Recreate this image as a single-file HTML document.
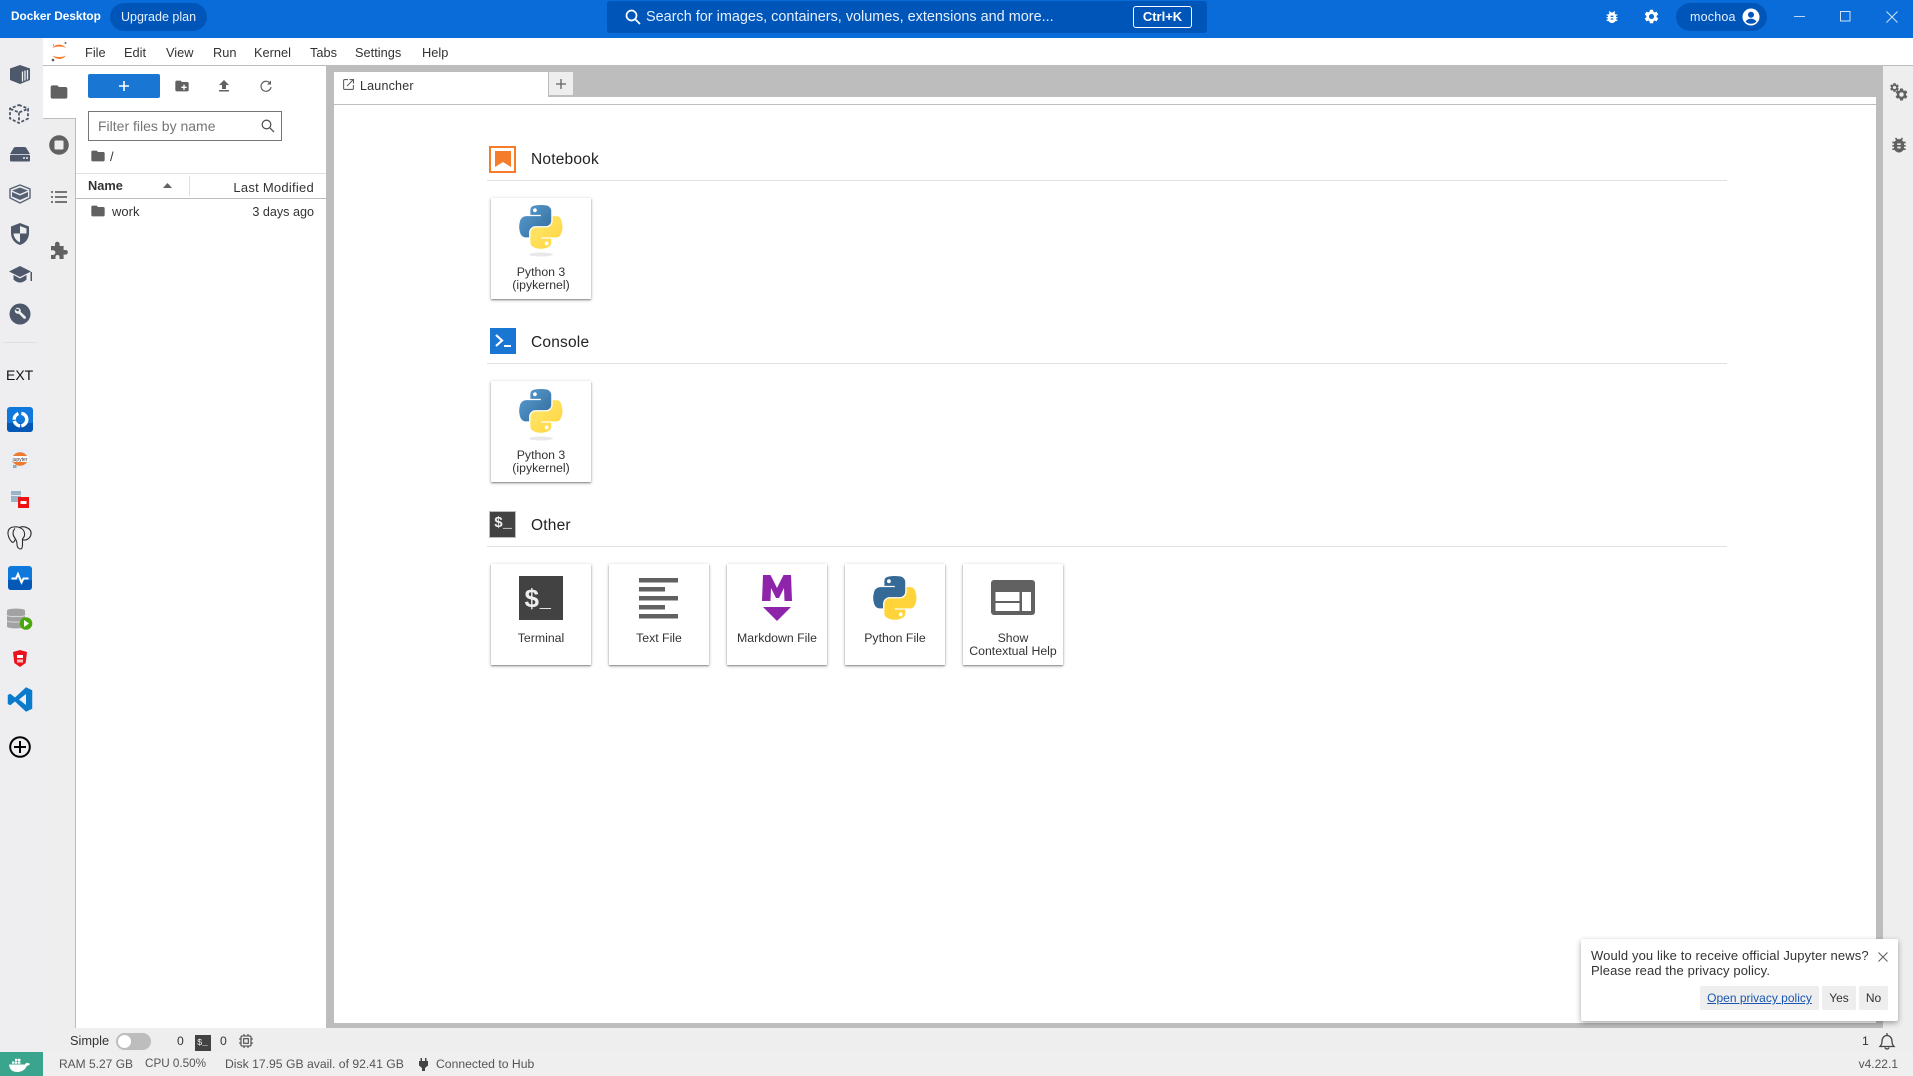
<!DOCTYPE html>
<html lang="en"><head><meta charset="utf-8"><title>Docker Desktop</title>
<style>
html,body{margin:0;padding:0;width:1913px;height:1076px;overflow:hidden;background:#eeeeee;font-family:"Liberation Sans",sans-serif;color:#333}
.a{position:absolute}
.t{position:absolute;white-space:nowrap;line-height:16px}
svg{position:absolute;overflow:visible}
.card{position:absolute;width:100px;height:101px;background:#fff;box-shadow:0 1px 3px rgba(0,0,0,.35),0 1px 1px rgba(0,0,0,.25)}
.lab{position:absolute;width:100px;text-align:center;font-size:12.3px;line-height:13px;color:#333}
.sec{position:absolute;font-size:15.5px;color:#222;line-height:18px;letter-spacing:.2px;white-space:nowrap}
.hr{position:absolute;left:487px;width:1240px;height:1px;background:#e0e0e0}
.m{position:absolute;top:45px;font-size:12.8px;line-height:16px;color:#333;white-space:nowrap}
.s{position:absolute;font-size:12.2px;line-height:14px;color:#555;white-space:nowrap}
</style></head>
<body>
<svg width="0" height="0" style="position:absolute"><defs>
<linearGradient id="pb" x1="0" y1="0" x2="1" y2="1"><stop offset="0" stop-color="#5a9fd4"/><stop offset="1" stop-color="#306998"/></linearGradient>
<linearGradient id="py" x1="0" y1="0" x2="1" y2="1"><stop offset="0" stop-color="#ffe873"/><stop offset="1" stop-color="#ffd43b"/></linearGradient>
<symbol id="pyB" viewBox="0 0 112 113"><path d="M54.919 0C50.335 0 45.958.4 42.106 1.1 30.76 3.1 28.7 7.3 28.7 15v10.25h26.8v3.4H18.64C10.85 28.66 4 33.34 1.9 42.25c-2.46 10.2-2.57 16.6 0 27.25 1.9 7.93 6.45 13.59 14.24 13.59h9.22V70.84c0-8.85 7.66-16.66 16.75-16.66h26.78c7.46 0 13.4-6.14 13.4-13.63V15c0-7.26-6.13-12.72-13.4-13.94C64.28.33 59.5 0 54.92 0zM40.42 8.2c2.77 0 5.03 2.3 5.03 5.14 0 2.82-2.26 5.1-5.03 5.1-2.78 0-5.03-2.28-5.03-5.1 0-2.84 2.25-5.14 5.03-5.14z"/></symbol>
<symbol id="pyY" viewBox="0 0 112 113"><path d="M85.64 28.66v11.9c0 9.23-7.83 17-16.75 17H42.1c-7.33 0-13.4 6.28-13.4 13.63v25.54c0 7.27 6.32 11.54 13.4 13.63 8.49 2.5 16.63 2.95 26.79 0 6.75-1.96 13.4-5.9 13.4-13.63V86.5H55.51v-3.4H95.7c7.8 0 10.7-5.43 13.4-13.6 2.8-8.4 2.68-16.5 0-27.25-1.93-7.74-5.6-13.6-13.4-13.6H85.64zM70.58 93.32c2.78 0 5.03 2.28 5.03 5.1 0 2.82-2.25 5.13-5.03 5.13-2.77 0-5.03-2.3-5.03-5.13 0-2.82 2.26-5.1 5.03-5.1z"/></symbol>
<symbol id="folder" viewBox="0 0 24 24"><path d="M10 4H4c-1.1 0-2 .9-2 2v12c0 1.1.9 2 2 2h16c1.1 0 2-.9 2-2V8c0-1.1-.9-2-2-2h-8l-2-2z"/></symbol>
<symbol id="bug" viewBox="0 0 24 24"><path d="M20 8h-2.8c-.45-.78-1.07-1.45-1.82-1.96L17 4.41 15.59 3l-2.17 2.17C12.96 5.06 12.49 5 12 5s-.96.06-1.41.17L8.41 3 7 4.41l1.62 1.63C7.88 6.55 7.26 7.22 6.81 8H4v2h2.09c-.05.33-.09.66-.09 1v1H4v2h2v1c0 .34.04.67.09 1H4v2h2.81c1.04 1.79 2.97 3 5.19 3s4.15-1.21 5.19-3H20v-2h-2.09c.05-.33.09-.66.09-1v-1h2v-2h-2v-1c0-.34-.04-.67-.09-1H20V8zm-6 8h-4v-2h4v2zm0-4h-4v-2h4v2z"/></symbol>
<symbol id="gear" viewBox="0 0 24 24"><path d="M19.14 12.94c.04-.3.06-.61.06-.94 0-.32-.02-.64-.07-.94l2.03-1.58c.18-.14.23-.41.12-.61l-1.92-3.32c-.12-.22-.37-.29-.59-.22l-2.39.96c-.5-.38-1.03-.7-1.62-.94l-.36-2.54c-.04-.24-.24-.41-.48-.41h-3.84c-.24 0-.43.17-.47.41l-.36 2.54c-.59.24-1.13.57-1.62.94l-2.39-.96c-.22-.08-.47 0-.59.22L2.74 8.87c-.12.21-.08.47.12.61l2.03 1.58c-.05.3-.09.63-.09.94s.02.64.07.94l-2.03 1.58c-.18.14-.23.41-.12.61l1.92 3.32c.12.22.37.29.59.22l2.39-.96c.5.38 1.03.7 1.62.94l.36 2.54c.05.24.24.41.48.41h3.84c.24 0 .44-.17.47-.41l.36-2.54c.59-.24 1.13-.56 1.62-.94l2.39.96c.22.08.47 0 .59-.22l1.92-3.32c.12-.22.07-.47-.12-.61l-2.01-1.58zM12 15.6c-1.98 0-3.6-1.62-3.6-3.6s1.62-3.6 3.6-3.6 3.6 1.62 3.6 3.6-1.62 3.6-3.6 3.6z"/></symbol>
</defs></svg>

<!-- title bar -->
<div class="a" style="left:0;top:0;width:1913px;height:38px;background:#0a6cd9"></div>
<div class="t" style="left:11px;top:8px;font-size:11.8px;font-weight:bold;color:#fff">Docker Desktop</div>
<div class="a" style="left:110px;top:3px;width:97px;height:28px;border-radius:14px;background:#0055b8"></div>
<div class="t" style="left:110px;top:9px;width:97px;text-align:center;font-size:12.5px;color:#e6f0ff">Upgrade plan</div>
<div class="a" style="left:607px;top:1px;width:600px;height:32px;border-radius:3px;background:#0055b8"></div>
<svg style="left:625px;top:9px" width="16" height="16" viewBox="0 0 16 16" fill="none" stroke="#fff" stroke-width="1.7"><circle cx="6.5" cy="6.5" r="5"/><path d="M10.2 10.2L15 15"/></svg>
<div class="t" style="left:646px;top:9px;font-size:14.45px;color:#e6f0ff">Search for images, containers, volumes, extensions and more...</div>
<div class="a" style="left:1133px;top:6px;width:57px;height:20px;border:1px solid #fff;border-radius:3px;color:#fff;font-size:13px;font-weight:bold;text-align:center;line-height:20px">Ctrl+K</div>
<svg style="left:1604px;top:9px;fill:#fff" width="16" height="16"><use href="#bug"/></svg>
<svg style="left:1643px;top:8px;fill:#fff" width="17" height="17"><use href="#gear"/></svg>
<div class="a" style="left:1676px;top:3px;width:91px;height:28px;border-radius:14px;background:#0055b8"></div>
<div class="t" style="left:1690px;top:9px;font-size:12.5px;color:#e6f0ff;letter-spacing:.2px">mochoa</div>
<svg style="left:1742px;top:8px" width="18" height="18" viewBox="0 0 18 18"><circle cx="9" cy="9" r="8.5" fill="#fff"/><circle cx="9" cy="6.8" r="3" fill="#0055b8"/><path d="M3.6 13.6c1-2 3.2-2.9 5.4-2.9s4.400.9 5.400 2.900C13 15 11 15.800 9 15.800S5 15 3.600 13.600z" fill="#0055b8"/></svg>
<svg style="left:1794px;top:16px" width="12" height="2"><rect width="11" height="1" fill="#bcd6f7"/></svg>
<svg style="left:1840px;top:11px" width="11" height="11" fill="none" stroke="#cfe2fa"><rect x=".5" y=".5" width="9.500" height="9.500"/></svg>
<svg style="left:1886px;top:11px" width="12" height="12" stroke="#cfe2fa" fill="none"><path d="M.5.500l11 11M11.500.500l-11 11"/></svg>

<!-- docker sidebar -->
<div class="a" style="left:0;top:38px;width:43px;height:1014px;background:#eeeef1"></div>
<svg style="left:9px;top:65px" width="22" height="20" viewBox="0 0 22 20"><path d="M11 0L21 3.500V15L11 19 1 15V3.500z" fill="#4d586a"/><path d="M13.500 6.500v10M16 5.500v10M18.500 5v9.500" stroke="#eeeef1" stroke-width="1.300"/></svg>
<svg style="left:8px;top:104px" width="22" height="20" viewBox="0 0 22 20" fill="none" stroke="#4d586a" stroke-width="1.800" stroke-dasharray="3 1.800"><path d="M11 1l9 3.500v10L11 19l-9-4.500v-10zM2.500 5L11 8.500 19.500 5M11 8.500V18"/></svg>
<svg style="left:9px;top:146px" width="22" height="16" viewBox="0 0 22 16"><path d="M1 8L5 1.500Q6 1 7 1H15Q16 1 17 1.500L21 8z" fill="#4d586a"/><rect x="1" y="8.800" width="20" height="6.700" rx="1.300" fill="#4d586a"/><circle cx="15" cy="12" r="1" fill="#eeeef1"/><circle cx="18" cy="12" r="1" fill="#eeeef1"/></svg>
<svg style="left:9px;top:184px" width="22" height="20" viewBox="0 0 22 20"><path d="M11 1L21 5v9l-10 5L1 14V5z" fill="none" stroke="#566174" stroke-width="1.400"/><path d="M11 3.500L19 6.500l-8 3.500L3 6.500zM3 8l8 3.500L19 8v4.500L11 16 3 12.500z" fill="#566174"/></svg>
<svg style="left:10px;top:223px" width="20" height="22" viewBox="0 0 20 22"><path d="M10 0L19 3.500V10c0 6-4 10.500-9 12C5 20.500 1 16 1 10V3.500z" fill="#4d586a"/><path d="M10 3l6.500 2.500V10.500H10zM10 10.500H3.500c.3 4 3 7.500 6.500 8.800z" fill="#eeeef1"/></svg>
<svg style="left:9px;top:265px" width="24" height="18" viewBox="0 0 24 18"><path d="M11 1L22 6.500 11 12 0 6.500z" fill="#4d586a"/><path d="M4.500 10v4.500c2 2 4.500 3 6.500 3s4.500-1 6.500-3V10L11 13.500z" fill="#4d586a"/><rect x="21.500" y="7" width="1.500" height="9" fill="#4d586a"/></svg>
<svg style="left:9px;top:303px" width="22" height="22" viewBox="0 0 22 22"><circle cx="11" cy="11" r="10.500" fill="#4d586a"/><path d="M6.500 5.500c1.500-1.200 3.800-.8 4.800.6.600 1 .6 1.800.3 2.700l5 4.700c.6.600.5 1.400 0 2-.6.500-1.500.600-2 0l-4.800-4.900c-1 .3-2 .2-2.900-.5-1.100-.9-1.500-2.500-.8-3.700l2.200 2 1.500-.5.400-1.500z" fill="#eeeef1"/></svg>
<div class="a" style="left:3px;top:342px;width:34px;height:1px;background:#e0e0e3"></div>
<div class="t" style="left:6px;top:367px;font-size:14px;color:#111">EXT</div>
<svg style="left:7px;top:407px" width="26" height="25" viewBox="0 0 26 25"><rect width="26" height="25" rx="3" fill="#0e78dc"/><path d="M0 16h26v6a3 3 0 0 1-3 3H3a3 3 0 0 1-3-3z" fill="#0558b6"/><circle cx="13.500" cy="12.500" r="6.300" fill="none" stroke="#fff" stroke-width="3.400" stroke-dasharray="9 1.200 8 1.200 8 3"/></svg>
<svg style="left:10px;top:449px" width="20" height="20" viewBox="0 0 20 20"><rect width="20" height="20" rx="2" fill="#e8edf3"/><path d="M3 7C6 2 14 2 17 7zM3 13c3 5 11 5 14 0z" fill="#ef7a2f"/><rect x="1.500" y="7.500" width="17" height="5" fill="#fff"/><text x="10" y="12" text-anchor="middle" font-size="5" font-family="Liberation Sans,sans-serif" fill="#333">jupyter</text><rect x="3" y="16" width="3.500" height="3" fill="#9aa"/></svg>
<svg style="left:11px;top:491px" width="18" height="17" viewBox="0 0 18 17"><rect width="10" height="11" fill="#9bb4c6"/><rect x="0" y="4" width="10" height="1" fill="#dfe8ee"/><rect x="7" y="6" width="11" height="11" fill="#ee1111"/><rect x="9.500" y="10" width="6" height="3" fill="#fff"/></svg>
<svg style="left:7px;top:526px" width="25" height="24" viewBox="0 0 25 24" fill="none" stroke="#2b2b2b" stroke-width="1.100"><path d="M12.500 1.500c-2-1-4-.8-6-.5C2.500 1.500.7 4 1 8c.3 3 2 6.500 4 8 1.500 1 2.500-.5 3-2.500"/><path d="M12.500 1.500c2-1 4.500-.9 6.500-.2 3.500 1.200 5.500 3.500 5 7-.3 2.500-2 4-3.500 5"/><path d="M8 2.500C5.500 5 5.500 9 7.500 11.500c1.500 2 2.500 4 2.500 7 0 2.500 1.500 4.500 3.500 4.500 1.500 0 2-2 2-4.500v-6"/><path d="M12 1.500c4 1 6 4 5.500 8-.3 2-2 2.500-2 4 1 1 4 .5 5.500-.5"/></svg>
<svg style="left:8px;top:566px" width="24" height="24" viewBox="0 0 24 24"><rect width="24" height="24" rx="3" fill="#0e78dc"/><path d="M0 14h24v7a3 3 0 0 1-3 3H3a3 3 0 0 1-3-3z" fill="#0558b6"/><path d="M3.500 12.500H8l2-4.500 3.500 8.500 2-4h5" fill="none" stroke="#fff" stroke-width="2"/></svg>
<svg style="left:7px;top:607px" width="26" height="23" viewBox="0 0 26 23"><path d="M0 3.500C0 1 18 1 18 3.500v16C18 22 0 22 0 19.500z" fill="#a2a2a2"/><path d="M0 8.500c2 1.500 16 1.500 18 0M0 14c2 1.500 16 1.500 18 0" stroke="#dcdcdc" fill="none"/><circle cx="19" cy="16.500" r="6.300" fill="#4aa80d"/><path d="M17 13l5 3.500-5 3.500z" fill="#fff"/></svg>
<svg style="left:13px;top:650px" width="14" height="17" viewBox="0 0 14 17"><path d="M0 2L7 0l7 2-1.300 11L7 17l-5.700-4z" fill="#e8131c"/><rect x="4" y="5" width="6" height="3" fill="#fff"/><rect x="4" y="9.500" width="6" height="3" fill="#fbb"/></svg>
<svg style="left:7px;top:687px" width="26" height="25" viewBox="0 0 100 100"><path d="M74 1L99 13v74L74 99 30 58 11 73 1 68V32l10-5 19 15zM74 28L46 50l28 22z" fill="#0a7acc"/></svg>
<svg style="left:9px;top:736px" width="22" height="22" viewBox="0 0 22 22" fill="none" stroke="#000" stroke-width="2"><circle cx="11" cy="11" r="9.800"/><path d="M5 11h12M11 5v12"/></svg>

<!-- Jupyter menu -->
<div class="a" style="left:43px;top:38px;width:1870px;height:27px;background:#fff"></div>
<div class="a" style="left:43px;top:65px;width:1870px;height:1px;background:#bdbdbd"></div>
<svg style="left:51px;top:41px" width="17" height="22" viewBox="0 0 17 22"><path d="M1.500 7C4 2.500 12 2.500 15 7 12 5 5 5 1.500 7zM1.500 14.500C5 19 12 19 15 14.500 12 16.500 5 16.500 1.500 14.500z" fill="#f37726"/><circle cx="14.500" cy="2" r="1" fill="#666"/><circle cx="2" cy="19" r="1.300" fill="#555"/><circle cx="2.500" cy="4" r=".7" fill="#888"/></svg>
<div class="m" style="left:85px">File</div><div class="m" style="left:124px">Edit</div><div class="m" style="left:166px">View</div><div class="m" style="left:213px">Run</div><div class="m" style="left:254px">Kernel</div><div class="m" style="left:310px">Tabs</div><div class="m" style="left:355px">Settings</div><div class="m" style="left:422px">Help</div>

<!-- left rail -->
<div class="a" style="left:43px;top:66px;width:33px;height:52px;background:#fff"></div>
<div class="a" style="left:43px;top:118px;width:33px;height:1px;background:#bdbdbd"></div>
<div class="a" style="left:75px;top:118px;width:1px;height:910px;background:#bdbdbd"></div>
<svg style="left:49px;top:82px;fill:#616161" width="20" height="20"><use href="#folder"/></svg>
<svg style="left:49px;top:135px" width="20" height="20" viewBox="0 0 20 20"><circle cx="10" cy="10" r="9.800" fill="#616161"/><rect x="5.500" y="5.500" width="9" height="9" rx="1" fill="#eee"/></svg>
<svg style="left:51px;top:190px" width="16" height="14" viewBox="0 0 16 14" fill="#757575"><rect x="0" y="1" width="2" height="2"/><rect x="4" y="1" width="12" height="2"/><rect x="0" y="6" width="2" height="2"/><rect x="4" y="6" width="12" height="2"/><rect x="0" y="11" width="2" height="2"/><rect x="4" y="11" width="12" height="2"/></svg>
<svg style="left:50px;top:241px" width="18" height="18" viewBox="0 0 18 18"><path d="M1 5h4V3a2.300 2.300 0 0 1 4.600 0v2h4v4h2a2.300 2.300 0 0 1 0 4.600h-2V18H9.500v-2a2 2 0 0 0-4 0v2H1v-4h2a2.400 2.400 0 0 0 0-4.800H1z" fill="#616161"/></svg>

<!-- file browser -->
<div class="a" style="left:76px;top:66px;width:250px;height:962px;background:#fff"></div>
<div class="a" style="left:88px;top:74px;width:72px;height:24px;background:#1976d2;border-radius:2px"></div>
<svg style="left:119px;top:81px" width="10" height="10"><path d="M0 5h10M5 0v10" stroke="#fff" stroke-width="1.600"/></svg>
<svg style="left:174px;top:78px" width="16" height="16" viewBox="0 0 24 24"><path d="M10 4H4c-1.100 0-2 .9-2 2v12c0 1.100.9 2 2 2h16c1.100 0 2-.9 2-2V8c0-1.100-.9-2-2-2h-8z" fill="#616161"/><path d="M11 13h3v-3h2v3h3v2h-3v3h-2v-3h-3z" fill="#fff"/></svg>
<svg style="left:218px;top:80px" width="12" height="12" viewBox="0 0 12 12" fill="#616161"><path d="M6 0L11 5H8v4H4V5H1zM1 10h10v1.500H1z"/></svg>
<svg style="left:260px;top:80px" width="12" height="12" viewBox="0 0 12 12" fill="none" stroke="#616161" stroke-width="1.200"><path d="M10.500 4A5 5 0 1 0 11 7"/><path d="M11 .5V4.500H7z" fill="#616161" stroke="none"/></svg>
<div class="a" style="left:88px;top:111px;width:192px;height:28px;border:1px solid #757575"></div>
<div class="t" style="left:98px;top:118px;font-size:14px;color:#757575">Filter files by name</div>
<svg style="left:261px;top:119px" width="14" height="14" viewBox="0 0 14 14" fill="none" stroke="#555" stroke-width="1.300"><circle cx="5.500" cy="5.500" r="4.300"/><path d="M8.800 8.800L13 13"/></svg>
<svg style="left:90px;top:148px;fill:#616161" width="16" height="16"><use href="#folder"/></svg>
<div class="t" style="left:110px;top:149px;font-size:13px;color:#333">/</div>
<div class="a" style="left:76px;top:173px;width:250px;height:1px;background:#e0e0e0"></div>
<div class="a" style="left:76px;top:198px;width:250px;height:1px;background:#bdbdbd"></div>
<div class="a" style="left:189px;top:176px;width:1px;height:20px;background:#e0e0e0"></div>
<div class="t" style="left:88px;top:178px;font-size:12.800px;font-weight:bold;color:#333">Name</div>
<svg style="left:163px;top:183px" width="9" height="5"><path d="M0 5L4.500 0 9 5z" fill="#616161"/></svg>
<div class="t" style="right:1599px;top:180px;font-size:13px;color:#333;letter-spacing:.25px">Last Modified</div>
<svg style="left:90px;top:203px;fill:#616161" width="16" height="16"><use href="#folder"/></svg>
<div class="t" style="left:112px;top:204px;font-size:13px;color:#333">work</div>
<div class="t" style="right:1599px;top:204px;font-size:12.600px;color:#333">3 days ago</div>

<!-- main area -->
<div class="a" style="left:326px;top:66px;width:1557px;height:962px;background:#bdbdbd"></div>
<div class="a" style="left:334px;top:97px;width:1542px;height:926px;background:#fff"></div>
<div class="a" style="left:334px;top:72px;width:214px;height:33px;background:#fff"></div>
<div class="a" style="left:334px;top:104px;width:1542px;height:1px;background:#bdbdbd"></div>
<div class="a" style="left:548px;top:72px;width:25px;height:24px;background:#eeeeee;border-left:1px solid #bdbdbd;border-bottom:1px solid #bdbdbd;box-sizing:border-box"></div>
<svg style="left:556px;top:79px" width="10" height="10"><path d="M0 5h10M5 0v10" stroke="#616161" stroke-width="1.300"/></svg>
<svg style="left:343px;top:79px" width="11" height="11" viewBox="0 0 11 11" fill="none" stroke="#616161" stroke-width="1.100"><path d="M5 .6H1.600a1 1 0 0 0-1 1v7.800a1 1 0 0 0 1 1h7.800a1 1 0 0 0 1-1V6M4 7l6-6M6.500.6h4v4"/></svg>
<div class="t" style="left:360px;top:78px;font-size:12.500px;color:#333;letter-spacing:.2px">Launcher</div>

<!-- Notebook -->
<svg style="left:489px;top:146px" width="28" height="28" viewBox="0 0 28 28"><rect x="1" y="1" width="25" height="25" fill="#fff" stroke="#f57c2b" stroke-width="2"/><path d="M6 5h16v16l-8-5-8 5z" fill="#f57c2b"/></svg>
<div class="sec" style="left:531px;top:151px">Notebook</div>
<div class="hr" style="top:180px"></div>
<div class="card" style="left:491px;top:198px"></div>
<svg style="left:519px;top:205px;fill:url(#pb)" width="44" height="44"><use href="#pyB" width="44" height="44"/></svg>
<svg style="left:519px;top:205px;fill:url(#py)" width="44" height="44"><use href="#pyY" width="44" height="44"/></svg>
<svg style="left:527px;top:252px" width="28" height="5"><ellipse cx="14" cy="2.500" rx="12" ry="2" fill="#e8e8e8"/></svg>
<div class="lab" style="left:491px;top:266px">Python 3<br>(ipykernel)</div>

<!-- Console -->
<svg style="left:490px;top:328px" width="26" height="26" viewBox="0 0 26 26"><rect width="26" height="26" fill="#1976d2"/><path d="M6 7l6 5.500L6 18" fill="none" stroke="#fff" stroke-width="2.200"/><rect x="14" y="17" width="7" height="2" fill="#fff"/></svg>
<div class="sec" style="left:531px;top:334px">Console</div>
<div class="hr" style="top:363px"></div>
<div class="card" style="left:491px;top:381px"></div>
<svg style="left:519px;top:389px;fill:url(#pb)" width="44" height="44"><use href="#pyB" width="44" height="44"/></svg>
<svg style="left:519px;top:389px;fill:url(#py)" width="44" height="44"><use href="#pyY" width="44" height="44"/></svg>
<svg style="left:527px;top:436px" width="28" height="5"><ellipse cx="14" cy="2.500" rx="12" ry="2" fill="#e8e8e8"/></svg>
<div class="lab" style="left:491px;top:449px">Python 3<br>(ipykernel)</div>

<!-- Other -->
<div class="a" style="left:489px;top:511px;width:27px;height:27px;background:#424242;border:1px solid #bbb;box-sizing:border-box"></div>
<div class="t" style="left:494px;top:516px;font-size:15px;font-weight:bold;color:#eee;font-family:'Liberation Mono',monospace">$_</div>
<div class="sec" style="left:531px;top:517px">Other</div>
<div class="hr" style="top:546px"></div>

<div class="card" style="left:491px;top:564px"></div>
<div class="a" style="left:519px;top:576px;width:44px;height:44px;background:#424242"></div>
<div class="t" style="left:524px;top:587px;font-size:26px;line-height:26px;font-weight:bold;color:#eee;font-family:'Liberation Mono',monospace">$<span style="font-size:19px">_</span></div>
<div class="lab" style="left:491px;top:632px">Terminal</div>

<div class="card" style="left:609px;top:564px"></div>
<svg style="left:639px;top:578px" width="40" height="40" fill="#616161"><rect y="0" width="39" height="4.500"/><rect y="9" width="26" height="4.500"/><rect y="18" width="39" height="4.500"/><rect y="27" width="26" height="4.500"/><rect y="36" width="39" height="4.500"/></svg>
<div class="lab" style="left:609px;top:632px">Text File</div>

<div class="card" style="left:727px;top:564px"></div>
<svg style="left:762px;top:575px" width="30" height="46" viewBox="0 0 30 46" fill="#8e24aa"><path d="M1 0h7.500L15 13 21.500 0H29l1 26h-7.500l-.5-13-5 10h-3L9 13l-.5 13H0z"/><path d="M1 32h28L15 46z"/></svg>
<div class="lab" style="left:727px;top:632px">Markdown File</div>

<div class="card" style="left:845px;top:564px"></div>
<svg style="left:873px;top:576px;fill:#366a96" width="44" height="44"><use href="#pyB" width="44" height="44"/></svg>
<svg style="left:873px;top:576px;fill:#ffd43b" width="44" height="44"><use href="#pyY" width="44" height="44"/></svg>
<div class="lab" style="left:845px;top:632px">Python File</div>

<div class="card" style="left:963px;top:564px"></div>
<svg style="left:991px;top:580px" width="44" height="36" viewBox="0 0 44 36"><rect width="44" height="35" rx="3" fill="#616161"/><rect x="4.500" y="12" width="24" height="9" fill="#fff"/><rect x="4.500" y="23" width="24" height="8" fill="#fff"/><rect x="31" y="12" width="9" height="19" fill="#fff"/></svg>
<div class="lab" style="left:963px;top:632px">Show<br>Contextual Help</div>

<!-- right rail -->
<div class="a" style="left:1883px;top:66px;width:30px;height:962px;background:#eeeeee"></div>
<svg style="left:1889px;top:82px;fill:#616161" width="11" height="11"><use href="#gear"/></svg>
<svg style="left:1894px;top:87px;fill:#616161" width="15" height="15"><use href="#gear"/></svg>
<svg style="left:1889px;top:135px;fill:#616161" width="20" height="20"><use href="#bug"/></svg>

<!-- status -->
<div class="a" style="left:43px;top:1028px;width:1870px;height:24px;background:#eeeeee"></div>
<div class="a" style="left:0;top:1052px;width:1913px;height:24px;background:#efefef"></div>
<div class="a" style="left:0;top:1052px;width:43px;height:24px;background:#3aa58c"></div>
<svg style="left:9px;top:1057px" width="21" height="15" viewBox="0 0 21 15" fill="#fff"><path d="M0 7.500h16c.5-1.500 2-2 3-1.500l2 .8c-.6 1.500-2 2-3.200 2C16.500 12.500 13 15 8.500 15 3 15 .5 12 0 7.500z"/><rect x="3" y="4.500" width="2.400" height="2.200"/><rect x="6" y="4.500" width="2.400" height="2.200"/><rect x="9" y="4.500" width="2.400" height="2.200"/><rect x="6" y="1.800" width="2.400" height="2.200"/><rect x="9" y="1.800" width="2.400" height="2.200"/></svg>
<div class="s" style="left:70px;top:1034px;color:#333;font-size:12.800px">Simple</div>
<div class="a" style="left:116px;top:1033px;width:35px;height:17px;background:#bdbdbd;border-radius:9px"></div>
<div class="a" style="left:118px;top:1035px;width:13px;height:13px;background:#fff;border-radius:50%"></div>
<div class="s" style="left:177px;top:1034px;color:#333">0</div>
<div class="a" style="left:195px;top:1035px;width:16px;height:16px;background:#424242"></div>
<div class="t" style="left:197px;top:1036px;font-size:9px;line-height:14px;color:#eee;font-family:'Liberation Mono',monospace">$_</div>
<div class="s" style="left:220px;top:1034px;color:#333">0</div>
<svg style="left:239px;top:1034px" width="14" height="14" viewBox="0 0 14 14" fill="none" stroke="#444" stroke-width="1.100"><rect x="2" y="2" width="10" height="10" rx="1"/><rect x="4.700" y="4.700" width="4.600" height="4.600"/><path d="M5 0v2M9 0v2M5 12v2M9 12v2M0 5h2M0 9h2M12 5h2M12 9h2"/></svg>
<div class="s" style="left:59px;top:1057px;font-size:12px">RAM 5.27 GB</div>
<div class="s" style="left:145px;top:1057px;font-size:11.700px">CPU 0.50%</div>
<div class="s" style="left:225px;top:1057px">Disk 17.95 GB avail. of 92.41 GB</div>
<svg style="left:419px;top:1058px" width="9" height="13" viewBox="0 0 9 13" fill="#444"><path d="M1.500 0h1.500v3h3V0h1.500v3H9v4.500L6 10v3H3v-3L0 7.500V3h1.500z"/></svg>
<div class="s" style="left:436px;top:1057px">Connected to Hub</div>
<div class="s" style="left:1862px;top:1034px;color:#333">1</div>
<svg style="left:1878px;top:1032px" width="18" height="18" viewBox="0 0 18 18" fill="none" stroke="#444" stroke-width="1.300"><path d="M2 14.500c1.500-1.500 2-2.500 2-5 0-3.500 2-6 5-6s5 2.500 5 6c0 2.500.5 3.500 2 5zM7 15.500c.3 1 1 1.500 2 1.500s1.700-.5 2-1.500M9 1v2.500"/></svg>
<div class="s" style="right:15px;top:1057px;font-size:12px">v4.22.1</div>

<!-- notification -->
<div class="a" style="left:1581px;top:939px;width:317px;height:82px;background:#fff;border-radius:2px;box-shadow:0 2px 6px rgba(0,0,0,.35)"></div>
<div class="t" style="left:1591px;top:949px;font-size:13px;line-height:14px;color:#333;letter-spacing:.12px"><span style="display:block;height:15px">Would you like to receive official Jupyter news?</span>Please read the privacy policy.</div>
<svg style="left:1878px;top:952px" width="10" height="10" stroke="#616161" fill="none" stroke-width="1.100"><path d="M.5.500l9 9M9.500.500l-9 9"/></svg>
<div class="a" style="left:1700px;top:986px;width:119px;height:24px;background:#eeeeee;border-radius:2px;text-align:center;font-size:12px;line-height:25px;color:#1a56b0"><u>Open privacy policy</u></div>
<div class="a" style="left:1822px;top:986px;width:34px;height:24px;background:#eeeeee;border-radius:2px;text-align:center;font-size:12px;line-height:25px;color:#333">Yes</div>
<div class="a" style="left:1859px;top:986px;width:29px;height:24px;background:#eeeeee;border-radius:2px;text-align:center;font-size:12px;line-height:25px;color:#333">No</div>
</body></html>
